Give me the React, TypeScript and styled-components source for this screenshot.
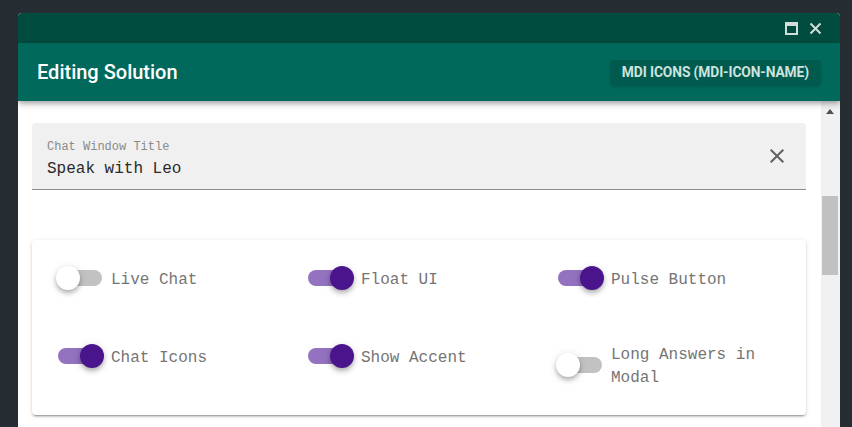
import styled, { createGlobalStyle } from 'styled-components';

const GlobalStyle = createGlobalStyle`
  html, body {
    margin: 0;
    padding: 0;
    background: #252d32;
    overflow: hidden;
  }
  * {
    box-sizing: border-box;
  }
`;

type Toggle = {
  label: string;
  on: boolean;
};

const toggles: Toggle[] = [
  { label: 'Live Chat', on: false },
  { label: 'Float UI', on: true },
  { label: 'Pulse Button', on: true },
  { label: 'Chat Icons', on: true },
  { label: 'Show Accent', on: true },
  { label: 'Long Answers in Modal', on: false },
];

function App() {
  return (
    <Page>
      <GlobalStyle />
      <Window>
        <TitleBar>
          <WinButton aria-label="maximize">
            <svg width="13" height="13" viewBox="0 0 13 13">
              <rect x="1" y="1" width="11" height="11" fill="none" stroke="#d3dedb" strokeWidth="2" />
              <rect x="1" y="1" width="11" height="3" fill="#d3dedb" />
            </svg>
          </WinButton>
          <WinButton aria-label="close">
            <svg width="13" height="13" viewBox="0 0 13 13">
              <path d="M1.5 1.5 L11.5 11.5 M11.5 1.5 L1.5 11.5" stroke="#d3dedb" strokeWidth="2" />
            </svg>
          </WinButton>
        </TitleBar>
        <Header>
          <HeaderTitle>Editing Solution</HeaderTitle>
          <HeaderButton>MDI Icons (mdi-icon-name)</HeaderButton>
        </Header>
        <Body>
          <Content>
            <TextField>
              <FieldInner>
                <FieldLabel>Chat Window Title</FieldLabel>
                <FieldValue>Speak with Leo</FieldValue>
              </FieldInner>
              <ClearIcon aria-label="clear">
                <svg width="24" height="24" viewBox="0 0 24 24">
                  <path
                    fill="#616161"
                    d="M19,6.41L17.59,5L12,10.59L6.41,5L5,6.41L10.59,12L5,17.59L6.41,19L12,13.41L17.59,19L19,17.59L13.41,12L19,6.41Z"
                  />
                </svg>
              </ClearIcon>
            </TextField>
            <Card>
              <ToggleGrid>
                {toggles.map(t => (
                  <ToggleCell key={t.label}>
                    <Switch>
                      <Track $on={t.on} />
                      <Thumb $on={t.on} />
                    </Switch>
                    <ToggleLabel>{t.label}</ToggleLabel>
                  </ToggleCell>
                ))}
              </ToggleGrid>
            </Card>
          </Content>
          <Scrollbar>
            <ScrollArrow />
            <ScrollThumb />
          </Scrollbar>
        </Body>
      </Window>
    </Page>
  );
}

const Page = styled.div`
  height: 427px;
  padding: 13px 12px 0 18px;
  overflow: hidden;
`;

const Window = styled.div`
  height: 470px;
  display: flex;
  flex-direction: column;
  background: #ffffff;
  border-radius: 4px 4px 0 0;
  overflow: hidden;
`;

const TitleBar = styled.div`
  height: 30px;
  flex: none;
  display: flex;
  align-items: center;
  justify-content: flex-end;
  gap: 11px;
  padding: 0 18px 0 0;
  background: #004d40;
`;

const WinButton = styled.div`
  display: flex;
  width: 13px;
  height: 13px;
`;

const Header = styled.div`
  position: relative;
  z-index: 2;
  height: 58px;
  flex: none;
  display: flex;
  align-items: center;
  justify-content: space-between;
  padding: 0 19px 0 19px;
  background: #00695c;
  box-shadow: 0 2px 4px -1px rgba(0, 0, 0, 0.2), 0 4px 5px 0 rgba(0, 0, 0, 0.14),
    0 1px 10px 0 rgba(0, 0, 0, 0.12);
`;

const HeaderTitle = styled.div`
  font-family: Roboto, 'Noto Sans', sans-serif;
  font-size: 20px;
  font-weight: 500;
  color: #ffffff;
`;

const HeaderButton = styled.div`
  height: 25px;
  display: flex;
  align-items: center;
  padding: 0 12px;
  border-radius: 4px;
  background: #015a4e;
  box-shadow: 0 2px 3px rgba(0, 0, 0, 0.15);
  font-family: Roboto, 'Noto Sans', sans-serif;
  font-size: 13.8px;
  font-weight: 700;
  letter-spacing: -0.1px;
  text-transform: uppercase;
  color: #cde3de;
`;

const Body = styled.div`
  flex: 1;
  display: flex;
  min-height: 0;
`;

const Content = styled.div`
  flex: 1;
  display: flex;
  flex-direction: column;
  gap: 50px;
  padding: 22px 15px 0 14px;
`;

const TextField = styled.div`
  height: 67px;
  display: flex;
  align-items: flex-start;
  padding: 16px 17px 0 15px;
  background: #f0f0f0;
  border-radius: 4px 4px 0 0;
  border-bottom: 1px solid #8f8f8f;
`;

const FieldInner = styled.div`
  flex: 1;
  display: flex;
  flex-direction: column;
  gap: 4px;
  font-family: 'Liberation Mono', 'DejaVu Sans Mono', monospace;
`;

const FieldLabel = styled.div`
  font-size: 12px;
  line-height: 16px;
  color: #8a8a8a;
`;

const FieldValue = styled.div`
  font-size: 16px;
  line-height: 20px;
  color: #2a2a2a;
`;

const ClearIcon = styled.div`
  display: flex;
  margin-top: 5px;
`;

const Card = styled.div`
  padding: 24px 12px 27px;
  background: #ffffff;
  border-radius: 4px;
  box-shadow: 0 3px 1px -2px rgba(0, 0, 0, 0.2), 0 2px 2px 0 rgba(0, 0, 0, 0.14),
    0 1px 5px 0 rgba(0, 0, 0, 0.12);
`;

const ToggleGrid = styled.div`
  display: grid;
  grid-template-columns: repeat(3, 1fr);
  row-gap: 50px;
  align-items: start;
`;

const ToggleCell = styled.div`
  display: flex;
  align-items: center;
  gap: 7px;
  padding: 0 12px;
  min-height: 28px;
`;

const Switch = styled.div`
  position: relative;
  flex: none;
  width: 48px;
  height: 24px;
`;

const Track = styled.div<{ $on: boolean }>`
  position: absolute;
  left: 2px;
  right: 2px;
  top: 4px;
  height: 16px;
  border-radius: 8px;
  background: ${p => (p.$on ? '#9372c0' : '#c2c2c2')};
`;

const Thumb = styled.div<{ $on: boolean }>`
  position: absolute;
  top: 0;
  left: ${p => (p.$on ? '24px' : '0')};
  width: 24px;
  height: 24px;
  border-radius: 50%;
  background: ${p => (p.$on ? '#4a148c' : '#ffffff')};
  box-shadow: 0 2px 4px -1px rgba(0, 0, 0, 0.2), 0 4px 5px 0 rgba(0, 0, 0, 0.14),
    0 1px 10px 0 rgba(0, 0, 0, 0.12);
`;

const ToggleLabel = styled.div`
  position: relative;
  top: 2px;
  font-family: 'Liberation Mono', 'DejaVu Sans Mono', monospace;
  font-size: 16px;
  line-height: 23px;
  color: #757575;
`;

const Scrollbar = styled.div`
  position: relative;
  flex: none;
  width: 19px;
  background: #f1f1f1;
  padding: 95px 2px 0 1px;
`;

const ScrollArrow = styled.div`
  position: absolute;
  top: 8px;
  left: 5px;
  width: 0;
  height: 0;
  border-left: 4px solid transparent;
  border-right: 4px solid transparent;
  border-bottom: 5px solid #505050;
`;

const ScrollThumb = styled.div`
  height: 79px;
  background: #c1c1c1;
`;

export default App;
